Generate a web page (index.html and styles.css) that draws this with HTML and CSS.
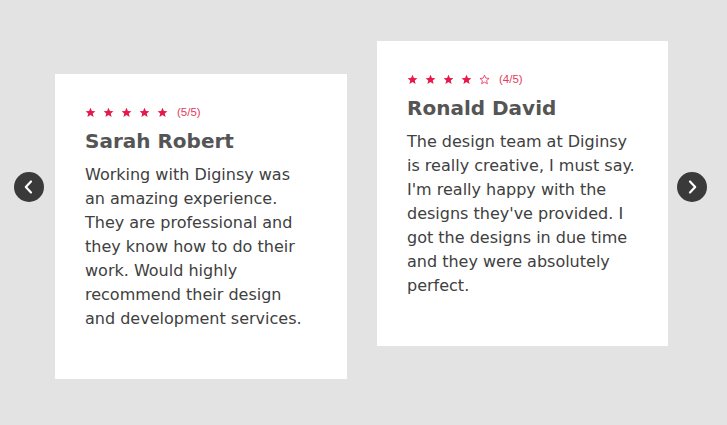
FILE: index.html
```html
<!DOCTYPE html>
<html lang="en">
<head>
<meta charset="utf-8">
<title>Testimonials</title>
<link rel="stylesheet" href="styles.css">
</head>
<body>
<section class="slider">
  <button class="arrow arrow-prev" aria-label="Previous">
    <svg viewBox="0 0 30 30" width="30" height="30"><path d="M17 9.5 L11.8 15 L17 20.5" fill="none" stroke="#fff" stroke-width="2.2" stroke-linecap="round" stroke-linejoin="round"/></svg>
  </button>
  <div class="track">
    <article class="card card-low">
      <div class="rating">
        <svg class="star" viewBox="0 0 24 24"><path d="M12 1.5l3.1 7.1 7.6.6-5.8 5 1.8 7.5L12 17.7l-6.7 4 1.8-7.5-5.8-5 7.6-.6z"/></svg>
        <svg class="star" viewBox="0 0 24 24"><path d="M12 1.5l3.1 7.1 7.6.6-5.8 5 1.8 7.5L12 17.7l-6.7 4 1.8-7.5-5.8-5 7.6-.6z"/></svg>
        <svg class="star" viewBox="0 0 24 24"><path d="M12 1.5l3.1 7.1 7.6.6-5.8 5 1.8 7.5L12 17.7l-6.7 4 1.8-7.5-5.8-5 7.6-.6z"/></svg>
        <svg class="star" viewBox="0 0 24 24"><path d="M12 1.5l3.1 7.1 7.6.6-5.8 5 1.8 7.5L12 17.7l-6.7 4 1.8-7.5-5.8-5 7.6-.6z"/></svg>
        <svg class="star" viewBox="0 0 24 24"><path d="M12 1.5l3.1 7.1 7.6.6-5.8 5 1.8 7.5L12 17.7l-6.7 4 1.8-7.5-5.8-5 7.6-.6z"/></svg>
        <span class="score">(5/5)</span>
      </div>
      <h2 class="name">Sarah Robert</h2>
      <p class="quote">Working with Diginsy was an amazing experience. They are professional and they know how to do their work. Would highly recommend their design and development services.</p>
    </article>
    <article class="card card-high">
      <div class="rating">
        <svg class="star" viewBox="0 0 24 24"><path d="M12 1.5l3.1 7.1 7.6.6-5.8 5 1.8 7.5L12 17.7l-6.7 4 1.8-7.5-5.8-5 7.6-.6z"/></svg>
        <svg class="star" viewBox="0 0 24 24"><path d="M12 1.5l3.1 7.1 7.6.6-5.8 5 1.8 7.5L12 17.7l-6.7 4 1.8-7.5-5.8-5 7.6-.6z"/></svg>
        <svg class="star" viewBox="0 0 24 24"><path d="M12 1.5l3.1 7.1 7.6.6-5.8 5 1.8 7.5L12 17.7l-6.7 4 1.8-7.5-5.8-5 7.6-.6z"/></svg>
        <svg class="star" viewBox="0 0 24 24"><path d="M12 1.5l3.1 7.1 7.6.6-5.8 5 1.8 7.5L12 17.7l-6.7 4 1.8-7.5-5.8-5 7.6-.6z"/></svg>
        <svg class="star star-empty" viewBox="0 0 24 24"><path d="M12 2.5l2.9 6.6 7.1.6-5.4 4.7 1.7 7L12 17.6l-6.3 3.8 1.7-7L2 9.7l7.1-.6z"/></svg>
        <span class="score">(4/5)</span>
      </div>
      <h2 class="name">Ronald David</h2>
      <p class="quote">The design team at Diginsy is really creative, I must say. I'm really happy with the designs they've provided. I got the designs in due time and they were absolutely perfect.</p>
    </article>
  </div>
  <button class="arrow arrow-next" aria-label="Next">
    <svg viewBox="0 0 30 30" width="30" height="30"><path d="M13 9.5 L18.2 15 L13 20.5" fill="none" stroke="#fff" stroke-width="2.2" stroke-linecap="round" stroke-linejoin="round"/></svg>
  </button>
</section>
</body>
</html>
```

FILE: styles.css
```css
* { box-sizing: border-box; }

html, body {
  margin: 0;
  padding: 0;
  background: #e3e3e3;
}

body {
  font-family: "DejaVu Sans", "Liberation Sans", sans-serif;
  width: 727px;
  height: 425px;
  overflow: hidden;
}

.slider {
  position: relative;
  height: 425px;
  padding: 41px 0 0 55px;
}

.track {
  display: flex;
  align-items: flex-start;
  gap: 30px;
  height: 338px;
}

.card {
  background: #fff;
  width: 292px;
  height: 305px;
  padding: 32px 36px 0 30px;
}

.card-low { align-self: flex-end; }
.card-high {
  width: 291px;
  padding-right: 28px;
}

.rating {
  display: flex;
  align-items: center;
  gap: 7px;
  height: 12px;
}

.star {
  width: 11px;
  height: 11px;
  fill: #e5194b;
}

.star-empty {
  fill: none;
  stroke: #e5194b;
  stroke-width: 1.6;
}

.score {
  margin-left: 2px;
  font-family: "Liberation Sans", sans-serif;
  font-size: 11.5px;
  color: #e33a60;
}

.name {
  margin: 8px 0 0 0;
  font-size: 20px;
  line-height: 30px;
  font-weight: 700;
  color: #555;
}

.quote {
  margin: 7px 0 0 0;
  font-size: 16px;
  line-height: 24px;
  color: #404040;
}

.arrow {
  position: absolute;
  top: 172px;
  width: 30px;
  height: 30px;
  padding: 0;
  border: 0;
  border-radius: 50%;
  background: #3a3a3a;
  display: flex;
  align-items: center;
  justify-content: center;
}

.arrow-prev { left: 14px; }
.arrow-next { left: 677px; }
```
